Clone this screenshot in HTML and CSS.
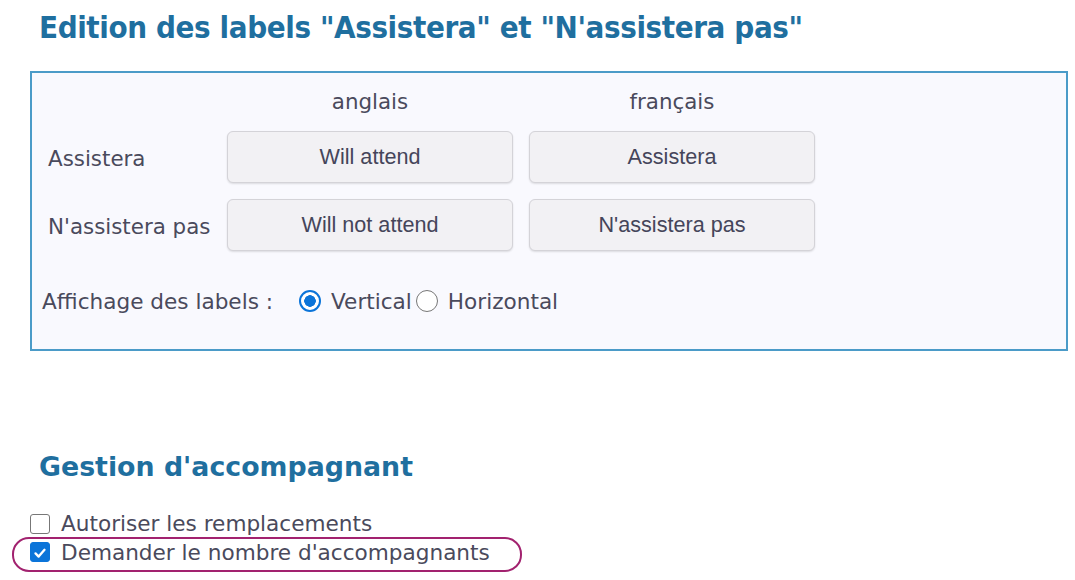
FILE: index.html
```html
<!DOCTYPE html>
<html lang="fr">
<head>
<meta charset="utf-8">
<title>Labels</title>
<link rel="stylesheet" href="styles.css">
</head>
<body>
<h1 class="title">Edition des labels "Assistera" et "N'assistera pas"</h1>
<div class="box">
  <div class="grid">
    <div class="head"></div>
    <div class="head">anglais</div>
    <div class="head">français</div>
    <div class="label">Assistera</div>
    <div class="btn">Will attend</div>
    <div class="btn">Assistera</div>
    <div class="label">N'assistera pas</div>
    <div class="btn">Will not attend</div>
    <div class="btn">N'assistera pas</div>
  </div>
  <div class="radios">
    <span class="rlabel">Affichage des labels :</span>
    <span class="radio on"></span><span class="rtext">Vertical</span>
    <span class="radio"></span><span class="rtext">Horizontal</span>
  </div>
</div>
<h2 class="sub">Gestion d'accompagnant</h2>
<div class="checks">
  <div class="check"><span class="cb"></span><span>Autoriser les remplacements</span></div>
  <div class="check hl"><span class="cb on"><svg viewBox="0 0 20 20" width="20" height="20"><path d="M5 10.5 L8.5 14 L15 6.5" fill="none" stroke="#fff" stroke-width="2.6" stroke-linecap="round" stroke-linejoin="round"/></svg></span><span>Demander le nombre d'accompagnants</span></div>
</div>
</body>
</html>
```
FILE: styles.css
```css
html, body { margin: 0; padding: 0; background: #fff; }
body { font-family: "DejaVu Sans", Verdana, sans-serif; color: #4a4a5c; width: 1075px; height: 580px; overflow: hidden; }
.title {
  font-family: "DejaVu Sans Condensed", "DejaVu Sans", sans-serif;
  font-weight: bold; font-size: 31px; letter-spacing: -0.4px;
  color: #1f6f9f; margin: 0 0 0 39px; padding-top: 8px; line-height: 38px; height: 63px;
}
.box {
  margin-left: 30px; width: 1038px; height: 280px; box-sizing: border-box;
  border: 2px solid #4b9bc8; background: #f9f9fe; padding: 16px 10px 0 10px;
}
.grid {
  display: grid; grid-template-columns: 163px 286px 286px; column-gap: 16px; row-gap: 16px;
  grid-template-rows: 26px 52px 52px; margin-left: 6px; font-size: 21.4px;
}
.head { text-align: center; line-height: 26px; }
.label { display: flex; align-items: center; padding-top: 2px; white-space: nowrap; }
.btn {
  display: flex; align-items: center; justify-content: center;
  font-family: "Liberation Sans", Arial, sans-serif; font-size: 21.6px;
  background: #f2f1f4; border: 1.5px solid #d4d3d8; border-radius: 6px;
  box-shadow: 0 1px 2px rgba(0,0,0,0.12); color: #45455a;
}
.radios { display: flex; align-items: center; height: 26px; margin-top: 37px; font-size: 21.6px; }
.rlabel { margin-right: 26px; }
.radio {
  width: 22px; height: 22px; box-sizing: border-box; border-radius: 50%;
  border: 1.5px solid #777; background: #fff; flex: none;
}
.radio.on { border: 2.5px solid #0b74d9; background: radial-gradient(circle, #0b74d9 0 5.5px, #fff 6px); }
.rtext { margin: 0 4px 0 10px; }
.rtext:last-child { margin-right: 0; }
.sub {
  font-family: "DejaVu Sans", Verdana, sans-serif; font-weight: bold; font-size: 26.8px;
  color: #1f6f9f; margin: 0 0 0 39px; padding-top: 100px; line-height: 32px; height: 32px;
}
.checks { margin-top: 27px; font-size: 21.6px; }
.check { display: flex; align-items: center; height: 27px; margin-left: 30px; }
.check .cb {
  width: 20px; height: 20px; box-sizing: border-box; border: 1.5px solid #777; border-radius: 3px;
  background: #fff; margin-right: 11px; flex: none; display: flex;
}
.check .cb.on { background: #0b74d9; border-color: #0b74d9; }
.check.hl {
  margin-left: 12px; width: 510px; height: 35px; box-sizing: border-box; padding: 0 0 5px 16px;
  border: 2px solid #a2226f; border-radius: 17px; margin-top: 0;
}
```
